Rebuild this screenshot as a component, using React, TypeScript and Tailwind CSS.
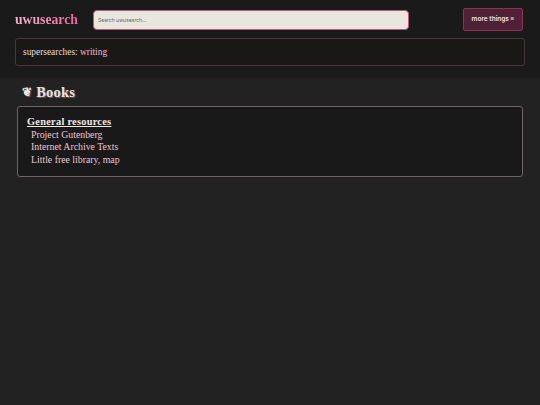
const links = ["Project Gutenberg", "Internet Archive Texts", "Little free library, map"];

export default function App() {
  return (
    <main className="flex min-h-[405px] flex-col bg-[#222222] font-['Liberation_Serif',serif]">
      <header className="flex h-[78px] flex-col gap-[7px] bg-[#1a1a1a] px-[15px] pt-2">
        <div className="flex h-[23px] items-center">
          <a className="w-[78px] bg-gradient-to-r from-[#f0b4cb] to-[#ec4899] bg-clip-text text-[13.7px] leading-[16px] font-bold text-transparent">
            uwusearch
          </a>
          <input
            placeholder="Search uwusearch..."
            className="h-[20px] w-[316px] rounded-[4px] border border-[#c2577c] bg-[#e8e6df] px-[4px] font-['Inter',sans-serif] text-[5px] placeholder:text-[#666666]"
          />
          <button className="mr-[2px] ml-auto h-[23px] w-[60px] rounded-[2px] border border-[#8f3156] bg-[#4f2036] font-['Inter',sans-serif] text-[6.5px] font-semibold text-[#efe0e6]">
            more things ≡
          </button>
        </div>
        <div className="flex h-[28px] items-center rounded-[3px] border border-[#4a3540] bg-[#191817] px-[7px] text-[9.4px] text-[#e0ddd6]">
          supersearches:&nbsp;<a className="text-[#f2bdd0]">writing</a>
        </div>
      </header>
      <section className="px-[17px] pt-[6px]">
        <h2 className="ml-[5px] flex h-[22px] items-center gap-[4px] pb-[6px] text-[14.5px] leading-[18px] font-bold tracking-[0.2px] text-[#e8e2db] [text-shadow:1px_1px_1px_#7a5563]">
          <span className="text-[12px]">❦</span>
          <span>Books</span>
        </h2>
        <div className="h-[71px] w-[506px] rounded-[3px] border border-[#6f6468] bg-[#191919] px-[9px] pt-[9px] text-[9.8px] leading-[12.7px]">
          <h3 className="text-[10.4px] font-bold tracking-[0.25px] text-[#efe9e2] underline">General resources</h3>
          <ul className="pl-[4px] text-[#f0c4d2]">
            {links.map((l) => (
              <li key={l}>{l}</li>
            ))}
          </ul>
        </div>
      </section>
    </main>
  );
}
